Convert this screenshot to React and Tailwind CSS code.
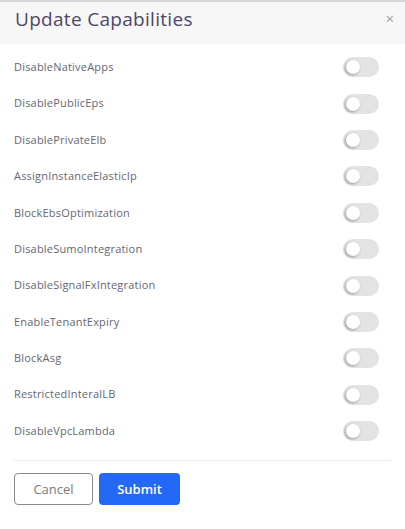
import React, { useState } from "react";

const capabilities = [
  "DisableNativeApps",
  "DisablePublicEps",
  "DisablePrivateElb",
  "AssignInstanceElasticIp",
  "BlockEbsOptimization",
  "DisableSumoIntegration",
  "DisableSignalFxIntegration",
  "EnableTenantExpiry",
  "BlockAsg",
  "RestrictedInteralLB",
  "DisableVpcLambda",
];

const Toggle = ({ on, onClick }) => (
  <button
    type="button"
    onClick={onClick}
    className={`relative w-[36px] h-[20px] rounded-full ${on ? "bg-[#1f6af5]" : "bg-[#e3e3e3]"}`}
  >
    <span
      className={`absolute top-[3px] w-[14px] h-[14px] rounded-full bg-white shadow-[-1px_1px_3px_rgba(0,0,0,0.35)] ${on ? "left-[19px]" : "left-[3px]"}`}
    />
  </button>
);

const App = () => {
  const [values, setValues] = useState({});

  return (
    <div className="w-[405px] h-[529px] bg-white flex flex-col" style={{ fontFamily: '"Open Sans", "Liberation Sans", sans-serif' }}>
      {/* Header */}
      <div className="h-[44px] bg-[#f7f7f7] border-t-2 border-[#d6d6d6] flex items-center justify-between pl-[15px] pr-[11px]">
        <h1 className="text-[19px] tracking-[0.3px] text-[#4d4766] leading-none -mt-[8px]">Update Capabilities</h1>
        <span className="text-[15px] text-[#a0a0a8] leading-none -mt-[10px]">×</span>
      </div>

      {/* Rows */}
      <div className="pt-[5px] px-[14px]">
        {capabilities.map((name) => (
          <div key={name} className="h-[36.4px] flex items-center justify-between pr-[12px]">
            <span className="text-[11px] tracking-[0.2px] text-[#666672]">{name}</span>
            <Toggle
              on={!!values[name]}
              onClick={() => setValues({ ...values, [name]: !values[name] })}
            />
          </div>
        ))}
      </div>

      {/* Footer */}
      <div className="mx-[14px] mt-[11px] border-t border-[#ececec]" />
      <div className="flex gap-[6px] px-[14px] mt-[12px]">
        <button className="w-[79px] h-[32px] border border-[#8a8a8a] rounded-[4px] text-[13px] text-[#7a7a7a]">
          Cancel
        </button>
        <button className="w-[81px] h-[32px] bg-[#2468f6] rounded-[4px] text-[13px] font-semibold text-white">
          Submit
        </button>
      </div>
    </div>
  );
};

export default App;
